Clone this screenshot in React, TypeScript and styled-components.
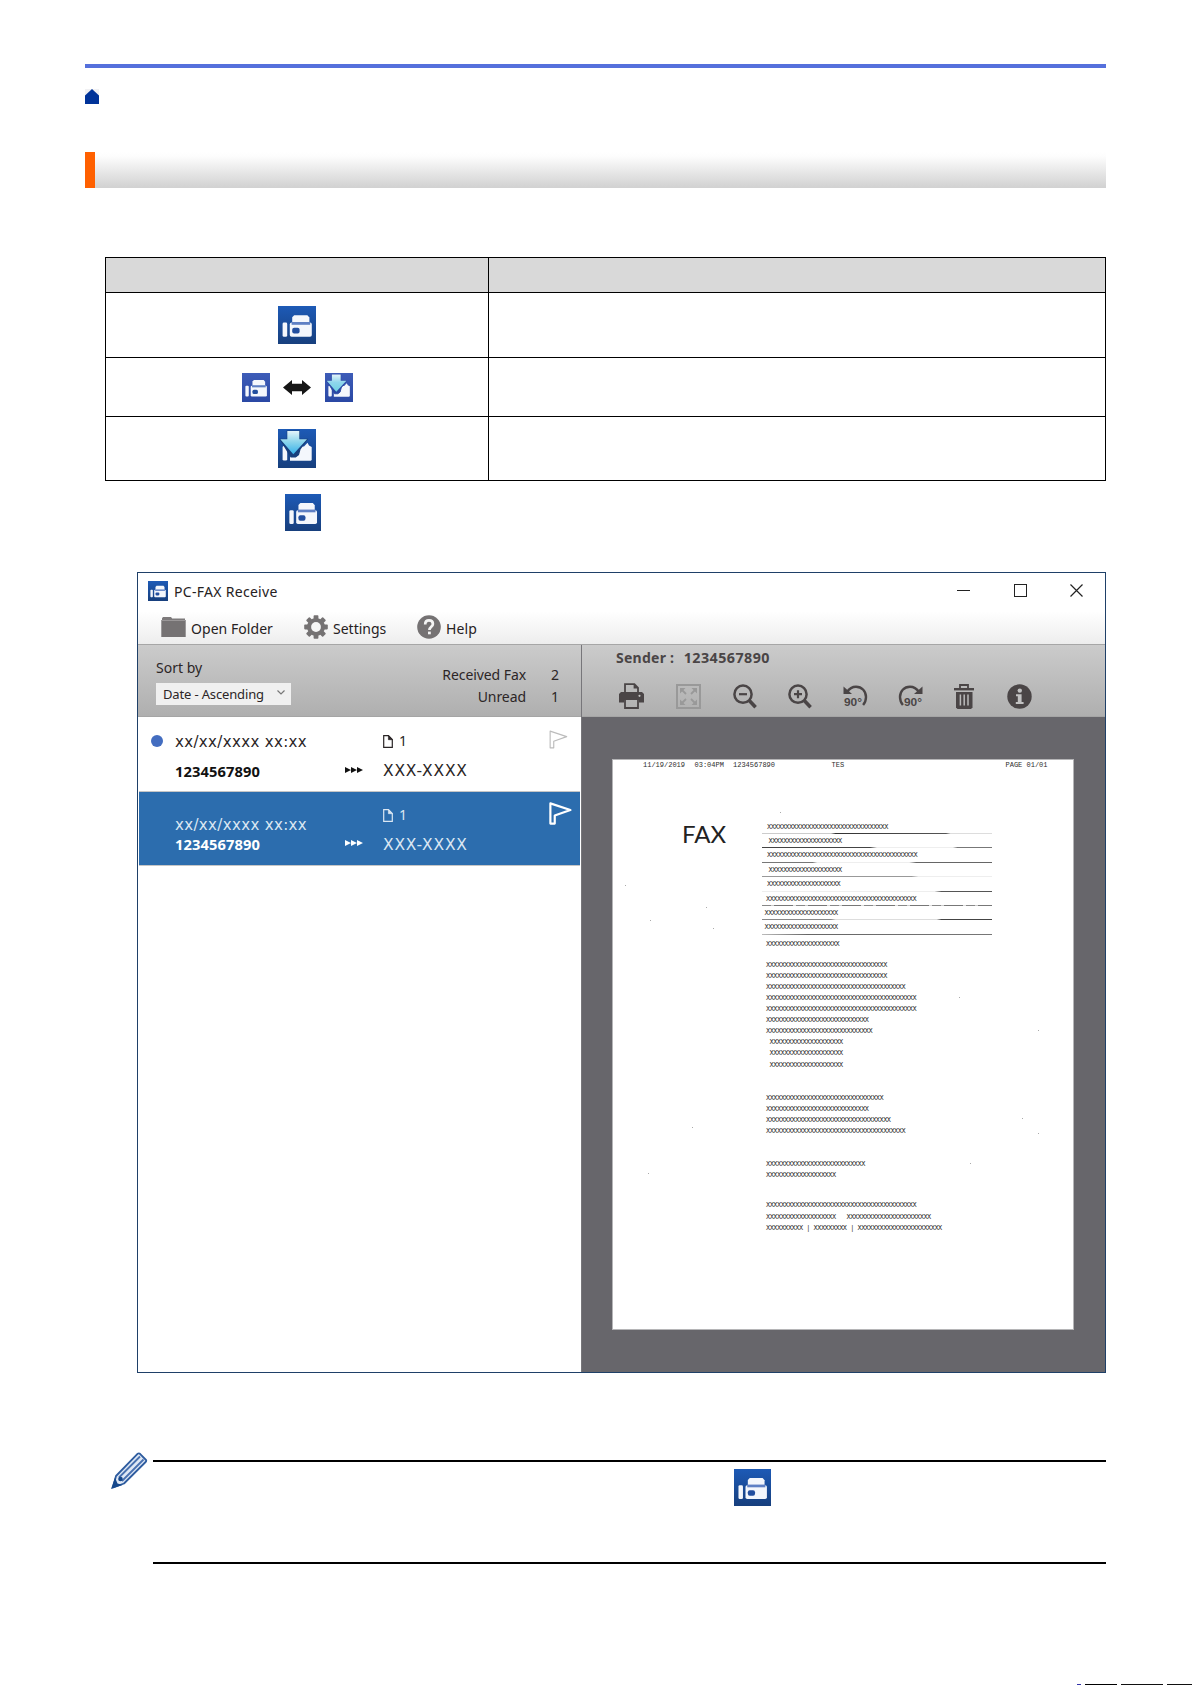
import React from 'react';
import styled, {createGlobalStyle, css} from 'styled-components';

const GlobalStyle = createGlobalStyle`
  * {
    box-sizing: border-box;
  }
  body {
    margin: 0;
    background: #fff;
    font-family: 'Noto Sans', 'Open Sans', sans-serif;
  }
  svg {
    display: block;
    flex: none;
  }
`;

/* ---------- icons ---------- */

type Tone = 'deep' | 'soft';
const tones = {
  deep: {from: '#1d5ab6', to: '#173f7d', arrow: '#35b0ea'},
  soft: {from: '#3d5cb8', to: '#2a48a4', arrow: '#6fd0e2'},
};

type FaxIconProps = {
  id: string;
  size: number;
  height?: number;
  tone?: Tone;
  receiving?: boolean;
};
const FaxIcon: React.FC<FaxIconProps> = ({
  id,
  size,
  height = size,
  tone = 'deep',
  receiving,
}) => (
  <svg width={size} height={height} viewBox="0 0 38 38" preserveAspectRatio="none">
    <defs>
      <linearGradient id={`${id}-bg`} x1="0" y1="0" x2="0" y2="1">
        <stop offset="0" stopColor={tones[tone].from} />
        <stop offset="1" stopColor={tones[tone].to} />
      </linearGradient>
      <linearGradient id={`${id}-arrow`} x1="0" y1="0" x2="0" y2="1">
        <stop offset="0" stopColor="#e4f4fa" />
        <stop offset="0.45" stopColor="#8fd6ec" />
        <stop offset="1" stopColor={tones[tone].arrow} />
      </linearGradient>
    </defs>
    <rect width="38" height="38" fill={`url(#${id}-bg)`} />
    <rect x="4.6" y="16.6" width="4.6" height="14.2" rx="1.4" fill="#f4f7fc" />
    {receiving ? (
      <>
        <path d="M26 17 29.5 13.5l1.5 2.500 2.700 1.500v12.600l-1 .9H12V17z" fill="#f4f7fc" />
        <path
          d="M9.3 2h12v8H29L22 19.500 20.500 25l-3 2.200h-4.500L2.300 10h7z"
          fill={tones[tone].to}
          stroke={tones[tone].to}
          strokeWidth="1.2"
        />
        <path d="M9.3 2h12v8H29L15.3 24.5 2.3 10h7z" fill={`url(#${id}-arrow)`} />
      </>
    ) : (
      <>
        <path d="M16.2 9.2h13.2l2 2.4V17H14.2v-5.8z" fill="#f4f7fc" />
        <rect x="11.8" y="16.6" width="22" height="14.2" rx="1.8" fill="#f4f7fc" />
        <rect x="13.6" y="16" width="18.6" height="2.8" fill="#5f80c4" />
        <rect x="14.2" y="21.8" width="7.4" height="5.6" rx="2" fill="#234f9f" />
      </>
    )}
  </svg>
);

const HomeIcon = () => (
  <svg width="14" height="15" viewBox="0 0 14 15">
    <rect width="14" height="15" fill="#f1f1f3" />
    <path d="M7 0l7 6.6V15H0V6.6z" fill="#039" />
  </svg>
);

const SwapArrow = () => (
  <svg width="28" height="15" viewBox="0 0 28 15">
    <path d="M0 7.5 9 0v3.7h10V0l9 7.5-9 7.5v-3.7H9V15z" fill="#161616" />
  </svg>
);

const FolderIcon = () => (
  <svg width="25" height="20" viewBox="0 0 25 20">
    <path d="M1 3V1.2L2 0h8l1.2 1.5H24V3z" fill="#7d7a7b" />
    <path d="M.3 3h24.4v17H.3z" fill="#757273" />
    <path d="M1 3.5h23" stroke="#a3a1a2" strokeWidth=".8" />
  </svg>
);

const GearIcon = () => (
  <svg width="24" height="24" viewBox="-12 -12 24 24">
    <g fill="#757273">
      {[0, 45, 90, 135].map((a) => (
        <rect
          key={a}
          x="-2.4"
          y="-11.8"
          width="4.8"
          height="23.6"
          rx="0.8"
          transform={`rotate(${a})`}
        />
      ))}
      <circle r="9" />
    </g>
    <circle r="4.9" fill="#f6f6f6" />
  </svg>
);

const HelpIcon = () => (
  <svg width="24" height="24" viewBox="0 0 24 24">
    <circle cx="12" cy="12" r="11.8" fill="#757273" />
    <path
      d="M8.2 9.4C8.2 6.8 9.8 5.4 12 5.4s3.9 1.3 3.9 3.5c0 2.7-3.5 2.9-3.5 6"
      fill="none"
      stroke="#f4f4f4"
      strokeWidth="2.7"
    />
    <rect x="11" y="16.6" width="2.8" height="2.7" fill="#f4f4f4" />
  </svg>
);

const PageIcon = () => (
  <svg width="10" height="13" viewBox="0 0 10 13">
    <path d="M.7.7h4.8l3.8 3.9v7.7H.7z" fill="none" stroke="currentColor" strokeWidth="1.2" />
    <path d="M5.4.7v4h3.9z" fill="currentColor" stroke="currentColor" strokeWidth=".6" />
  </svg>
);

const TripleArrow = () => (
  <svg width="18" height="6" viewBox="0 0 18 6">
    <path d="M0 0l6 3-6 3zM6 0l6 3-6 3zM12 0l6 3-6 3z" fill="currentColor" />
  </svg>
);

const FlagIcon: React.FC<{size: number; weight: number}> = ({size, weight}) => (
  <svg width={size} height={size} viewBox="0 0 20 20">
    <path
      d="M1.2 1.2 18.6 7 5 11.8v7H1.2z"
      fill="none"
      stroke="currentColor"
      strokeWidth={weight}
      strokeLinejoin="round"
    />
  </svg>
);

const PrintIcon = () => (
  <svg width="25" height="26" viewBox="0 0 25 26">
    <path d="M6 10V1.2h9.4L19 4.8V10" fill="none" stroke="#4a4546" strokeWidth="1.8" />
    <path d="M14.6 1v4.6h4.6z" fill="#4a4546" />
    <path d="M2 9h21l2 2v8.5h-5V17H5v2.5H0V11z" fill="#4a4546" />
    <circle cx="20.5" cy="12.8" r="1.1" fill="#c4c4c4" />
    <path d="M6 17v8h13v-8" fill="none" stroke="#4a4546" strokeWidth="1.8" />
  </svg>
);

const FitIcon = () => (
  <svg width="25" height="25" viewBox="0 0 25 25">
    <rect x="1" y="1" width="23" height="23" fill="none" stroke="#999" strokeWidth="2" />
    <path
      d="M4 4h5.5L4 9.5zM21 4h-5.5L21 9.5zM4 21h5.5L4 15.5zM21 21h-5.5l5.5-5.5z"
      fill="#999"
    />
    <path d="M6 6l4 4M19 6l-4 4M6 19l4-4M19 19l-4-4" stroke="#999" strokeWidth="1.8" />
  </svg>
);

const ZoomIcon: React.FC<{plus?: boolean}> = ({plus}) => (
  <svg width="24" height="25" viewBox="0 0 24 25">
    <circle cx="10" cy="10.2" r="8.6" fill="none" stroke="#4a4546" strokeWidth="2.5" />
    <path d="M16 16.3l6.6 6.9" stroke="#4a4546" strokeWidth="3.6" />
    <path d={plus ? 'M6 10.2h8M10 6.2v8' : 'M6 10.2h8'} stroke="#4a4546" strokeWidth="2.2" />
  </svg>
);

const RotateIcon: React.FC<{right?: boolean}> = ({right}) => (
  <svg width="25" height="23" viewBox="0 0 25 23">
    <g transform={right ? 'translate(25) scale(-1 1)' : undefined}>
      <path
        d="M4 7C6 4 9 1.7 13 1.7c6 0 10 4.6 10 10.3 0 3.4-1.2 6-2.9 8"
        fill="none"
        stroke="#4a4546"
        strokeWidth="2.4"
      />
      <path d="M.5 1.5 9 9H.5z" fill="#4a4546" />
    </g>
    <text
      x={right ? 6 : 1}
      y="21"
      fill="#4a4546"
      fontFamily="Liberation Sans, sans-serif"
      fontWeight="700"
      fontSize="11"
      textLength="18"
      lengthAdjust="spacingAndGlyphs"
    >
      90°
    </text>
  </svg>
);

const TrashIcon = () => (
  <svg width="20" height="25" viewBox="0 0 20 25">
    <path d="M0 4h20v2.4H0z" fill="#4a4546" />
    <path d="M6 4V1h8v3" fill="none" stroke="#4a4546" strokeWidth="1.8" />
    <path d="M2 8h16.5v15.5L17 25H3.5L2 23.5z" fill="#4a4546" />
    <path d="M6.4 10.5v11M10.2 10.5v11M14 10.5v11" stroke="#b9b9b9" strokeWidth="1.5" />
  </svg>
);

const InfoIcon = () => (
  <svg width="25" height="25" viewBox="0 0 25 25">
    <circle cx="12.5" cy="12.5" r="12.2" fill="#4a4546" />
    <circle cx="12.8" cy="6.6" r="2.2" fill="#c2c2c2" />
    <path d="M9 10.2h5.6V18h2v2H8.8v-2h2v-5.8H9z" fill="#c2c2c2" />
  </svg>
);

const PencilIcon = () => (
  <svg width="38" height="38" viewBox="0 0 38 38">
    <path
      d="M5 24 26.5 1.8q1.5-.8 2.5 0l6 6.2q.6 1-.4 2L13 31.5 2 35.5z"
      fill="#dfe8f5"
      stroke="#2e5c9f"
      strokeWidth="1.8"
      strokeLinejoin="round"
    />
    <path d="M8 25.5 29 4.5M11 29 32.5 7.5" stroke="#4a72b0" strokeWidth="1.8" />
    <path d="M4 25.5 0 37l11.5-4-5-1.5z" fill="#16488c" />
    <circle cx="9.5" cy="27" r="2.3" fill="#16488c" />
  </svg>
);

/* ---------- document ---------- */

const Page = styled.main`
  display: flex;
  flex-direction: column;
  width: 1192px;
  height: 1685px;
  padding: 64px 86px 0 85px;
  overflow: hidden;
  background: #fff;
`;

const TopRule = styled.div`
  height: 4px;
  background: #5570dc;
`;

const Breadcrumb = styled.nav`
  height: 84px;
  padding-top: 21px;
`;

const TitleBar = styled.header`
  height: 36px;
  border-left: 10px solid #ff6000;
  background: linear-gradient(#fff 0%, #fdfdfd 12%, #d1d1d1 100%);
`;

const Table = styled.div`
  display: grid;
  grid-template-columns: 382px 1fr;
  grid-template-rows: 34px 64px 58px 63px;
  gap: 1px;
  margin: 69px 0 0 20px;
  padding: 1px;
  background: #000;
`;

const Cell = styled.div<{$head?: boolean}>`
  display: flex;
  align-items: center;
  justify-content: center;
  gap: 13.5px;
  background: ${({$head}) => ($head ? '#d9d9d9' : '#fff')};
`;

const Paragraph = styled.div`
  height: 91px;
  padding: 13px 0 0 200px;
`;

const Note = styled.section`
  display: flex;
  gap: 4px;
  margin: 79px 0 0 26px;
`;

const NoteBody = styled.div`
  flex: 1;
  height: 104px;
  margin-top: 8px;
  padding: 7px 0 0 580.5px;
  border-top: 2px solid #000;
  border-bottom: 2px solid #000;
`;

const ClippedFooter = styled.div`
  align-self: flex-end;
  width: 115px;
  height: 1px;
  margin: auto -86px 0 0;
  background: linear-gradient(
    90deg,
    #33a 4px,
    #fff 4px 8px,
    #000 8px 40px,
    #fff 40px 44px,
    #111 44px 86px,
    #fff 86px 90px,
    #111 90px
  );
`;

/* ---------- PC-FAX window ---------- */

const Window = styled.section`
  display: flex;
  flex-direction: column;
  height: 801px;
  margin-left: 52px;
  border: 1px solid #1f4068;
`;

type TextProps = {$size?: number; $track?: number; $bold?: boolean; $wide?: boolean};
const Text = styled.span<TextProps>`
  font-family: ${({$wide}) => ($wide ? "'DejaVu Sans', sans-serif" : 'inherit')};
  font-size: ${({$size = 14}) => $size}px;
  letter-spacing: ${({$track = 0}) => $track}px;
  font-weight: ${({$bold}) => ($bold ? 700 : 400)};
  line-height: 20px;
  white-space: pre;
`;

const Chrome = styled.div`
  height: 72px;
  border-bottom: 1px solid #a6a6a6;
  background: linear-gradient(#fff 38px, #ededed);
  color: #262122;
`;

const WindowTitle = styled.div`
  display: flex;
  align-items: center;
  height: 35px;
  padding: 0 22px 0 10px;
  gap: 6px;

  > ${Text} {
    padding-top: 2px;
  }
`;

const WindowButtons = styled.div`
  display: flex;
  gap: 43.5px;
  margin-left: auto;
`;

const MenuBar = styled.div`
  display: flex;
  height: 36px;
  padding: 6px 0 0 23px;
`;

const MenuItem = styled.div<{$width: number}>`
  display: flex;
  align-items: center;
  gap: 5px;
  width: ${({$width}) => $width}px;
  height: 26px;

  > ${Text} {
    padding-top: 3px;
  }
`;

const Panes = styled.div`
  display: grid;
  grid-template-columns: 444px 1fr;
  flex: 1;
`;

const toolbar = css`
  height: 72px;
  background: linear-gradient(#cbcbcb, #afafaf);
  border-bottom: 1px solid #a5a5a5;
  color: #2c2627;
`;

const ListPane = styled.div`
  border-right: 1px solid #77767a;
  background: #fff;
`;

const SortBar = styled.div`
  ${toolbar}
  display: flex;
  justify-content: space-between;
  padding: 13px 22px 0 18px;
`;

const SortField = styled.div`
  display: flex;
  flex-direction: column;
  gap: 5px;
`;

const Select = styled.div`
  display: flex;
  align-items: center;
  justify-content: space-between;
  width: 135px;
  height: 22px;
  padding: 0 6px 0 7px;
  background: #f0f0f0;

  > svg {
    margin-bottom: 3px;
  }
`;

const Counters = styled.div`
  display: grid;
  grid-template-columns: auto 8px;
  grid-auto-rows: 22px;
  column-gap: 25px;
  padding-top: 7px;
  text-align: right;
`;

const FaxRow = styled.div<{$selected?: boolean}>`
  display: grid;
  grid-template-columns: 36px 170px 38px 166px 24px;
  grid-template-rows: ${({$selected}) => ($selected ? '29px 26px' : '30px 28px')};
  height: ${({$selected}) => ($selected ? 74 : 75)}px;
  margin: 0 1px;
  padding-top: ${({$selected}) => ($selected ? 13 : 14)}px;
  border-bottom: 1px solid #c6c6c6;
  background: ${({$selected}) => ($selected ? '#2c6dae' : '#fff')};
  color: ${({$selected}) => ($selected ? '#dbe7f3' : '#2a2526')};
`;

const Slot = styled.div<{$drop?: number; $strong?: string}>`
  display: flex;
  align-items: center;
  gap: 6px;
  height: 20px;
  margin-top: ${({$drop = 0}) => $drop}px;
  color: ${({$strong = 'inherit'}) => $strong};
`;

const UnreadDot = styled.span`
  width: 12px;
  height: 12px;
  margin: -1px 0 0 12px;
  border-radius: 50%;
  background: #436dc0;
`;

const ViewerPane = styled.div`
  display: flex;
  flex-direction: column;
  background: #67666b;
`;

const ViewerBar = styled.div`
  ${toolbar}
  padding: 3px 0 0 34px;
  color: #4a4546;
`;

const Sender = styled.div`
  display: flex;
  gap: 9.5px;
  height: 20px;
`;

const Tools = styled.div`
  display: grid;
  grid-template-columns: 57px 57px 55px 55px 54.5px 56.5px 53px 25px;
  align-items: center;
  height: 26px;
  margin: 15px 0 0 3px;
`;

const Sheet = styled.div`
  position: relative;
  width: 462px;
  height: 571px;
  margin: 42px 0 0 30px;
  border: 1px solid #b5b5b7;
  background: #fff;
  color: #2e2e2e;
`;

const SheetHeader = styled.div`
  display: grid;
  grid-template-columns: 51.5px 38.5px 98.5px 174px auto;
  height: 8px;
  padding: 1px 0 0 30px;
  font: 7px/8px 'Liberation Mono', monospace;
  white-space: pre;
`;

const SheetBody = styled.div`
  display: grid;
  grid-template-columns: 149px 230px;
  margin-top: 51.5px;
`;

const FaxHeading = styled.h1`
  margin: 0;
  padding: 0 0 0 69px;
  font: 400 24px/28px Lato, sans-serif;
  color: #222;
`;

const Scan = styled.span<{$indent?: number}>`
  padding-left: ${({$indent = 0}) => $indent}px;
  font: 7px/8px 'Liberation Mono', monospace;
  letter-spacing: -0.54px;
  white-space: pre;
`;

const Field = styled.div<{$rule: string}>`
  display: flex;
  height: 14.43px;
  padding-top: 3px;
  background: ${({$rule}) => $rule} bottom / 100% 1px no-repeat;
`;

const Block = styled.div<{$top: number; $pitch?: number}>`
  display: grid;
  grid-auto-rows: ${({$pitch = 11.07}) => $pitch}px;
  margin-top: ${({$top}) => $top}px;
  padding-left: 4px;
`;

/* dust left by the scanner glass, over the sheet */
const Specks = styled.svg`
  position: absolute;
  inset: 0;
`;

const xs = (n: number) => 'X'.repeat(n);

const fine = 'repeating-linear-gradient(90deg, #888 0 9px, #ccc 9px 12px, #777 12px 31px, #ddd 31px 34px)';
const fields = [
  {n: 33, indent: 5, rule: 'linear-gradient(90deg, #ccc 30%, #333 32%, #555 80%, #ddd 82%)'},
  {n: 20, indent: 6.5, rule: 'linear-gradient(90deg, #444 0 47%, #eee 50% 83%, #777 85%)'},
  {n: 41, indent: 5, rule: 'linear-gradient(90deg, #777 0 22%, #eee 24% 64%, #666 67%)'},
  {n: 20, indent: 6.5, rule: 'linear-gradient(90deg, #999 0 65%, #eee 68%)'},
  {n: 20, indent: 5, rule: 'linear-gradient(90deg, #eee 0 75%, #555 78%)'},
  {n: 41, indent: 4, rule: fine},
  {n: 20, indent: 2.5, rule: 'linear-gradient(90deg, #888 0 30%, #ddd 32% 76%, #444 78%)'},
  {n: 20, indent: 2.5, rule: 'linear-gradient(90deg, #bbb, #666 20%, #777)'},
];

const letter = [33, 33, 38, 41, 41, 28, 29];
const specks = [
  [167, 52], [12, 125], [93, 147], [37, 160], [100, 168], [346, 237],
  [425, 270], [409, 358], [425, 373], [79, 367], [357, 403], [35, 413],
];

type FaxItem = {
  date: string;
  sender: string;
  pages: number;
  receiver: string;
  unread?: boolean;
  selected?: boolean;
};
const faxes: FaxItem[] = [
  {date: 'xx/xx/xxxx xx:xx', sender: '1234567890', pages: 1, receiver: 'XXX-XXXX', unread: true},
  {date: 'xx/xx/xxxx xx:xx', sender: '1234567890', pages: 1, receiver: 'XXX-XXXX', selected: true},
];

const FaxListItem: React.FC<{fax: FaxItem}> = ({fax}) => (
  <FaxRow $selected={fax.selected}>
    <Slot>{fax.unread && <UnreadDot />}</Slot>
    <Slot $drop={fax.selected ? 10 : 1}>
      <Text $size={15} $track={0.35} $wide>{fax.date}</Text>
    </Slot>
    <span />
    <Slot>
      <PageIcon />
      <Text>{fax.pages}</Text>
    </Slot>
    <Slot $drop={-2} $strong={fax.selected ? '#fff' : '#bcbcbc'}>
      <FlagIcon size={fax.selected ? 23 : 19} weight={fax.selected ? 1.9 : 1.2} />
    </Slot>
    <span />
    <Slot $strong={fax.selected ? '#fff' : '#111'}>
      <Text $size={14.7} $track={0.1} $bold>{fax.sender}</Text>
    </Slot>
    <Slot $drop={-1} $strong={fax.selected ? '#fff' : '#111'}>
      <TripleArrow />
    </Slot>
    <Slot $drop={fax.selected ? 1 : 0}>
      <Text $size={15.5} $track={0.8} $wide>{fax.receiver}</Text>
    </Slot>
  </FaxRow>
);

const FaxSheet = () => (
  <Sheet>
    <SheetHeader>
      <span>11/19/2019</span>
      <span>03:04PM</span>
      <span>1234567890</span>
      <span>TES</span>
      <span>PAGE 01/01</span>
    </SheetHeader>
    <SheetBody>
      <FaxHeading>FAX</FaxHeading>
      <div>
        {fields.map(({n, indent, rule}, i) => (
          <Field key={i} $rule={rule}>
            <Scan $indent={indent}>{xs(n)}</Scan>
          </Field>
        ))}
        <Block $top={5}>
          <Scan>{xs(20)}</Scan>
        </Block>
        <Block $top={10}>
          {letter.map((n, i) => (
            <Scan key={i}>{xs(n)}</Scan>
          ))}
          {[0, 1, 2].map((i) => (
            <Scan key={i} $indent={3.5}>{xs(20)}</Scan>
          ))}
        </Block>
        <Block $top={22}>
          {[32, 28, 34, 38].map((n) => (
            <Scan key={n}>{xs(n)}</Scan>
          ))}
        </Block>
        <Block $top={22}>
          <Scan>{xs(27)}</Scan>
          <Scan>{xs(19)}</Scan>
        </Block>
        <Block $top={19.5} $pitch={11.5}>
          <Scan>{xs(41)}</Scan>
          <Scan>{`${xs(19)}   ${xs(23)}`}</Scan>
          <Scan>{`${xs(10)} | ${xs(9)} | ${xs(23)}`}</Scan>
        </Block>
      </div>
    </SheetBody>
    <Specks width="459" height="569">
      {specks.map(([x, y]) => (
        <rect key={`${x}-${y}`} x={x} y={y} width="1" height="1" fill="#aaa" />
      ))}
    </Specks>
  </Sheet>
);

const PcFaxWindow = () => (
  <Window>
    <Chrome>
      <WindowTitle>
        <FaxIcon id="title" size={20} />
        <Text $track={0.3}>PC-FAX Receive</Text>
        <WindowButtons>
          <svg width="13" height="13" viewBox="0 0 13 13">
            <path d="M0 6.5h13" stroke="#222" />
          </svg>
          <svg width="13" height="13" viewBox="0 0 13 13">
            <rect x=".5" y=".5" width="12" height="12" fill="none" stroke="#222" />
          </svg>
          <svg width="13" height="13" viewBox="0 0 13 13">
            <path d="M.5.5l12 12M12.5.5l-12 12" stroke="#222" strokeWidth="1.2" />
          </svg>
        </WindowButtons>
      </WindowTitle>
      <MenuBar>
        <MenuItem $width={143}>
          <FolderIcon />
          <Text $track={0.05}>Open Folder</Text>
        </MenuItem>
        <MenuItem $width={113}>
          <GearIcon />
          <Text>Settings</Text>
        </MenuItem>
        <MenuItem $width={80}>
          <HelpIcon />
          <Text $track={0.1}>Help</Text>
        </MenuItem>
      </MenuBar>
    </Chrome>
    <Panes>
      <ListPane>
        <SortBar>
          <SortField>
            <Text>Sort by</Text>
            <Select>
              <Text $size={13} $track={-0.15}>Date - Ascending</Text>
              <svg width="8" height="5" viewBox="0 0 8 5">
                <path d="M.5.5 4 4 7.5.5" fill="none" stroke="#777" strokeWidth="1.2" />
              </svg>
            </Select>
          </SortField>
          <Counters>
            <Text $track={-0.08}>Received Fax</Text>
            <Text>2</Text>
            <Text $track={-0.08}>Unread</Text>
            <Text>1</Text>
          </Counters>
        </SortBar>
        {faxes.map((fax, i) => (
          <FaxListItem key={i} fax={fax} />
        ))}
      </ListPane>
      <ViewerPane>
        <ViewerBar>
          <Sender>
            <Text $track={0.25} $bold>Sender :</Text>
            <Text $size={14.3} $track={0.45} $bold>1234567890</Text>
          </Sender>
          <Tools>
            <PrintIcon />
            <FitIcon />
            <ZoomIcon />
            <ZoomIcon plus />
            <RotateIcon />
            <RotateIcon right />
            <TrashIcon />
            <InfoIcon />
          </Tools>
        </ViewerBar>
        <FaxSheet />
      </ViewerPane>
    </Panes>
  </Window>
);

const App = () => (
  <>
    <GlobalStyle />
    <Page>
      <TopRule />
      <Breadcrumb>
        <HomeIcon />
      </Breadcrumb>
      <TitleBar />
      <Table>
        <Cell $head />
        <Cell $head />
        <Cell>
          <FaxIcon id="ready" size={38} />
        </Cell>
        <Cell />
        <Cell>
          <FaxIcon id="busy" size={28} height={29} tone="soft" />
          <SwapArrow />
          <FaxIcon id="busy-in" size={28} height={29} tone="soft" receiving />
        </Cell>
        <Cell />
        <Cell>
          <FaxIcon id="received" size={38} height={39} receiving />
        </Cell>
        <Cell />
      </Table>
      <Paragraph>
        <FaxIcon id="step" size={36} height={37} />
      </Paragraph>
      <PcFaxWindow />
      <Note>
        <PencilIcon />
        <NoteBody>
          <FaxIcon id="note" size={37} />
        </NoteBody>
      </Note>
      <ClippedFooter />
    </Page>
  </>
);

export default App;
